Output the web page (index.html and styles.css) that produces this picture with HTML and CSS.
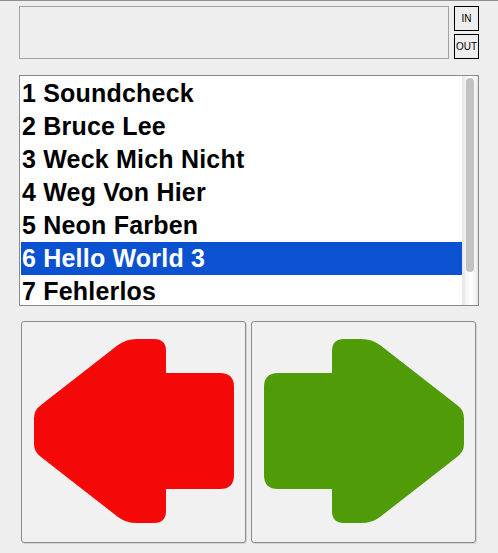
FILE: index.html
```html
<!DOCTYPE html>
<html>
<head>
<meta charset="utf-8">
<link rel="stylesheet" href="styles.css">
</head>
<body>
<div class="top">
  <div class="display"></div>
  <div class="io">
    <button class="io-btn">IN</button>
    <button class="io-btn">OUT</button>
  </div>
</div>
<div class="list">
  <ul class="items">
    <li class="item">1 Soundcheck</li>
    <li class="item">2 Bruce Lee</li>
    <li class="item">3 Weck Mich Nicht</li>
    <li class="item">4 Weg Von Hier</li>
    <li class="item">5 Neon Farben</li>
    <li class="item selected">6 Hello World 3</li>
    <li class="item">7 Fehlerlos</li>
  </ul>
  <div class="scrollbar"><div class="thumb"></div></div>
</div>
<div class="nav">
  <button class="nav-btn">
    <svg class="arrow" viewBox="22 322 223 220" width="223" height="220">
      <path fill="#f50808" d="M 137 339 L 154 339 Q 166 339 166 351 L 166 373 L 220 373 Q 234 373 234 387 L 234 475 Q 234 489 220 489 L 166 489 L 166 511 Q 166 523 154 523 L 137 523 Q 126 523 118 517 L 41 457 Q 34 452 34 444 L 34 418 Q 34 410 41 405 L 118 345 Q 126 339 137 339 Z"/>
    </svg>
  </button>
  <button class="nav-btn">
    <svg class="arrow" viewBox="252 322 223 220" width="223" height="220">
      <path fill="#4f9c08" d="M 361 339 L 344 339 Q 332 339 332 351 L 332 373 L 278 373 Q 264 373 264 387 L 264 475 Q 264 489 278 489 L 332 489 L 332 511 Q 332 523 344 523 L 361 523 Q 372 523 380 517 L 457 457 Q 464 452 464 444 L 464 418 Q 464 410 457 405 L 380 345 Q 372 339 361 339 Z"/>
    </svg>
  </button>
</div>
</body>
</html>
```
FILE: styles.css
```css
html, body {
  margin: 0;
  padding: 0;
}
body {
  background: #eeeeee;
  border-top: 1px solid #8e8e8e;
  font-family: "Liberation Sans", Arial, sans-serif;
  height: 552px;
  overflow: hidden;
}
.top {
  display: flex;
  gap: 5px;
  margin: 5px 0 0 19px;
  height: 53px;
}
.display {
  width: 430px;
  height: 53px;
  box-sizing: border-box;
  border: 1px solid #a2a2a2;
}
.io {
  display: flex;
  flex-direction: column;
  gap: 3px;
}
.io-btn {
  width: 25px;
  height: 25px;
  box-sizing: border-box;
  border: 1px solid #000;
  background: transparent;
  padding: 0;
  margin: 0;
  font-family: "Liberation Sans", Arial, sans-serif;
  font-size: 10px;
  color: #000;
  display: flex;
  align-items: center;
  justify-content: center;
}
.list {
  margin: 16px 0 0 19px;
  width: 460px;
  height: 231px;
  box-sizing: border-box;
  border: 1px solid #8a8a8a;
  background: #fff;
  display: flex;
  overflow: hidden;
}
.items {
  list-style: none;
  margin: 1px 0 0 1px;
  padding: 0;
  width: 441px;
  flex-shrink: 0;
  overflow: hidden;
}
.item {
  height: 33px;
  line-height: 33px;
  font-size: 25px;
  font-weight: bold;
  letter-spacing: 0.2px;
  padding-left: 1px;
  white-space: nowrap;
  color: #000;
}
.item.selected {
  background: #0b52d1;
  color: #fff;
}
.scrollbar {
  width: 16px;
  flex-shrink: 0;
  background: linear-gradient(to right, #e4e4e4, #f7f7f7 30%, #ffffff 55%, #f2f2f2 85%, #e2e2e2);
}
.thumb {
  margin: 2px 0 0 4px;
  width: 8px;
  height: 194px;
  border-radius: 4px;
  background: #c2c2c2;
}
.nav {
  display: flex;
  gap: 5px;
  margin: 15px 0 0 21px;
}
.nav-btn {
  width: 225px;
  height: 222px;
  box-sizing: border-box;
  border: 1px solid #8c8c8c;
  border-radius: 3px;
  background: #f1f1f1;
  padding: 0;
  margin: 0;
  box-shadow: 1px 1px 0 rgba(0, 0, 0, 0.1);
}
.arrow {
  display: block;
}
```
